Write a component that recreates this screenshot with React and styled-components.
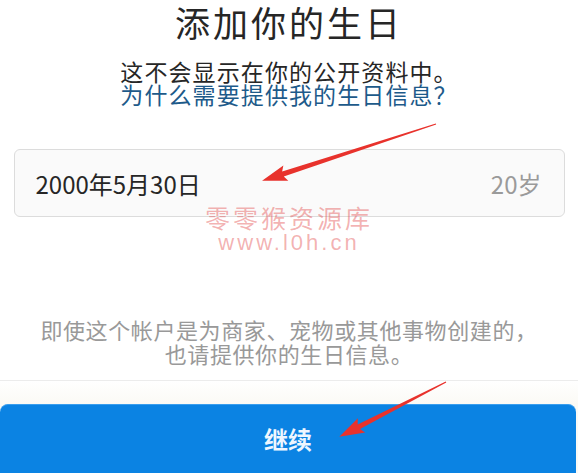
import React from "react";
import styled, { createGlobalStyle } from "styled-components";

const GlobalStyle = createGlobalStyle`
  html, body {
    margin: 0;
    padding: 0;
    background: #ffffff;
  }
  body {
    font-family: "Noto Sans CJK SC", "Noto Sans", sans-serif;
    overflow: hidden;
  }
`;

const Page = styled.div`
  position: relative;
  width: 578px;
  height: 473px;
  overflow: hidden;
  display: flex;
  flex-direction: column;
  align-items: center;
  & > * {
    flex-shrink: 0;
  }
`;

const Title = styled.h1`
  margin: 0;
  font-size: 35px;
  line-height: 44px;
  font-weight: 400;
  letter-spacing: 3px;
  color: #262626;
`;

const Lead = styled.p`
  margin: 16px 0 0;
  font-size: 23px;
  line-height: 23px;
  letter-spacing: 1.1px;
  color: #262626;
  text-align: center;
  a {
    display: block;
    color: #1d5a8a;
    text-decoration: none;
  }
`;

const Field = styled.div`
  box-sizing: border-box;
  width: 551px;
  height: 68px;
  margin: 43px 0 0;
  padding: 0 22px 0 21px;
  display: flex;
  align-items: center;
  justify-content: space-between;
  background: #fafafa;
  border: 1px solid #dcdcdc;
  border-radius: 6px;
  font-size: 24px;
`;

const Value = styled.span`
  color: ${(p) => (p.$muted ? "#9a9a9a" : "#262626")};
`;

const Note = styled.p`
  margin: 100px 0 0;
  font-size: 22px;
  line-height: 24px;
  letter-spacing: 0.6px;
  color: #999999;
  text-align: center;
`;

const BottomBar = styled.div`
  align-self: stretch;
  margin-top: 15px;
  border-top: 1px solid #ececec;
  padding: 23px 2px 0 0;
  background: linear-gradient(#ffffff, #fbfaf5 23px);
  height: 120px;
`;

const Button = styled.button`
  display: flex;
  justify-content: center;
  width: 100%;
  height: 90px;
  padding: 22px 0 0;
  border: 0;
  border-top: 1px solid #3a9eee;
  border-radius: 8px 8px 0 0;
  background: #0b83e3;
  color: #eef6ff;
  font-family: inherit;
  font-size: 24px;
  font-weight: 700;
  line-height: 24px;
`;

const Watermark = styled.div`
  position: absolute;
  left: 0;
  right: 0;
  top: 203px;
  display: flex;
  flex-direction: column;
  align-items: center;
  color: rgba(226, 70, 70, 0.42);
  pointer-events: none;
`;

const MarkLine = styled.span`
  font-size: ${(p) => p.$size}px;
  line-height: ${(p) => p.$lh}px;
  letter-spacing: ${(p) => p.$ls}px;
  font-family: ${(p) => (p.$latin ? '"Liberation Sans", sans-serif' : "inherit")};
`;

const Marks = styled.svg`
  position: absolute;
  left: 0;
  top: 0;
  width: 578px;
  height: 473px;
  pointer-events: none;
`;

const arrow = (L) =>
  `0,-0.6 ${L - 22},-2.6 ${L - 25},-8 ${L},0 ${L - 25},8 ${L - 22},2.6 0,0.6`;

const App = () => {
  return (
    <>
      <GlobalStyle />
      <Page>
        <Title>添加你的生日</Title>
        <Lead>
          这不会显示在你的公开资料中。
          <a href="#">为什么需要提供我的生日信息？</a>
        </Lead>
        <Field>
          <Value>2000年5月30日</Value>
          <Value $muted>20岁</Value>
        </Field>
        <Note>
          即使这个帐户是为商家、宠物或其他事物创建的，
          <br />
          也请提供你的生日信息。
        </Note>
        <BottomBar>
          <Button>继续</Button>
        </BottomBar>
        <Watermark>
          <MarkLine $size={25} $lh={28} $ls={3}>零零猴资源库</MarkLine>
          <MarkLine $size={22} $lh={24} $ls={3} $latin>www.l0h.cn</MarkLine>
        </Watermark>
        <Marks viewBox="0 0 578 473">
          <polygon
            points={arrow(183)}
            fill="#e8322c"
            transform="translate(436 124) rotate(161.9)"
          />
          <polygon
            points={arrow(120)}
            fill="#e8322c"
            transform="translate(446 382) rotate(152.8)"
          />
        </Marks>
      </Page>
    </>
  );
};

export default App;
